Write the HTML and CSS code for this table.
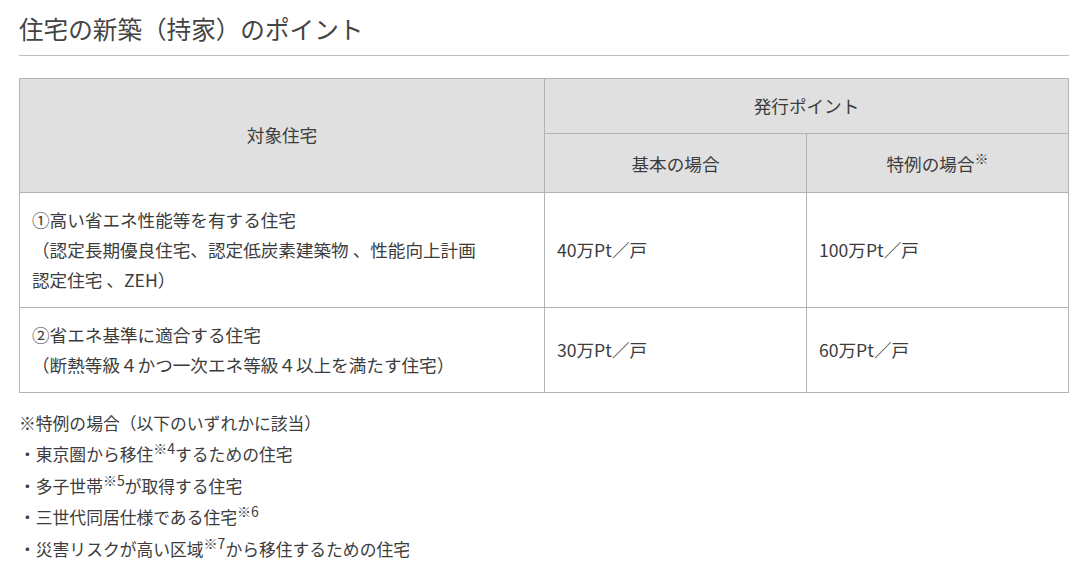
FILE: index.html
```html
<!DOCTYPE html>
<html lang="ja">
<head>
<meta charset="utf-8">
<title>住宅の新築（持家）のポイント</title>
<link rel="stylesheet" href="styles.css">
</head>
<body>
<div class="page">
  <h2 class="title">住宅の新築（持家）のポイント</h2>
  <table class="points">
    <colgroup>
      <col class="col-target">
      <col class="col-pt">
      <col class="col-pt">
    </colgroup>
    <thead>
      <tr>
        <th rowspan="2">対象住宅</th>
        <th colspan="2">発行ポイント</th>
      </tr>
      <tr class="sub-head">
        <th>基本の場合</th>
        <th>特例の場合<sup class="mark">※</sup></th>
      </tr>
    </thead>
    <tbody>
      <tr>
        <td>①高い省エネ性能等を有する住宅<br>（認定長期優良住宅、認定低炭素建築物 、性能向上計画<br>認定住宅 、ZEH）</td>
        <td>40万Pt／戸</td>
        <td>100万Pt／戸</td>
      </tr>
      <tr>
        <td>②省エネ基準に適合する住宅<br>（断熱等級４かつ一次エネ等級４以上を満たす住宅）</td>
        <td>30万Pt／戸</td>
        <td>60万Pt／戸</td>
      </tr>
    </tbody>
  </table>
  <div class="notes">
    <p class="note-head">※特例の場合（以下のいずれかに該当）</p>
    <ul class="note-list">
      <li>・東京圏から移住<sup class="mark">※4</sup>するための住宅</li>
      <li>・多子世帯<sup class="mark">※5</sup>が取得する住宅</li>
      <li>・三世代同居仕様である住宅<sup class="mark">※6</sup></li>
      <li>・災害リスクが高い区域<sup class="mark">※7</sup>から移住するための住宅</li>
    </ul>
  </div>
</div>
</body>
</html>
```
FILE: styles.css
```css
html, body {
  margin: 0;
  padding: 0;
  background: #ffffff;
}

body {
  font-family: "Noto Sans CJK JP", "Noto Sans", sans-serif;
  color: #3c3c3c;
}

.page {
  width: 1050px;
  padding: 10px 0 0 19px;
}

.title {
  margin: 0;
  padding: 0 0 8px 0;
  font-size: 24.6px;
  line-height: 1.5;
  font-weight: 400;
  color: #444444;
  border-bottom: 1px solid #bdbdbd;
}

.points {
  width: 1050px;
  margin-top: 22px;
  border-collapse: collapse;
  font-size: 17.6px;
  line-height: 30px;
  table-layout: fixed;
}

.col-target {
  width: 525px;
}

.col-pt {
  width: 262px;
}

.points th,
.points td {
  border: 1px solid #b3b3b3;
  padding: 12px 12px;
  font-weight: 400;
}

.points th {
  background: #e0e0e0;
  text-align: center;
  vertical-align: middle;
}

.points .sub-head th {
  padding-top: 15px;
  padding-bottom: 13px;
}

.points td {
  vertical-align: middle;
  text-align: left;
}

.mark {
  font-size: 14px;
  line-height: 0;
  vertical-align: 7px;
}

.notes {
  margin-top: 15px;
  font-size: 16.8px;
  line-height: 31.5px;
}

.note-head {
  margin: 0;
}

.note-list {
  margin: 0;
  padding: 0;
  list-style: none;
}
```
